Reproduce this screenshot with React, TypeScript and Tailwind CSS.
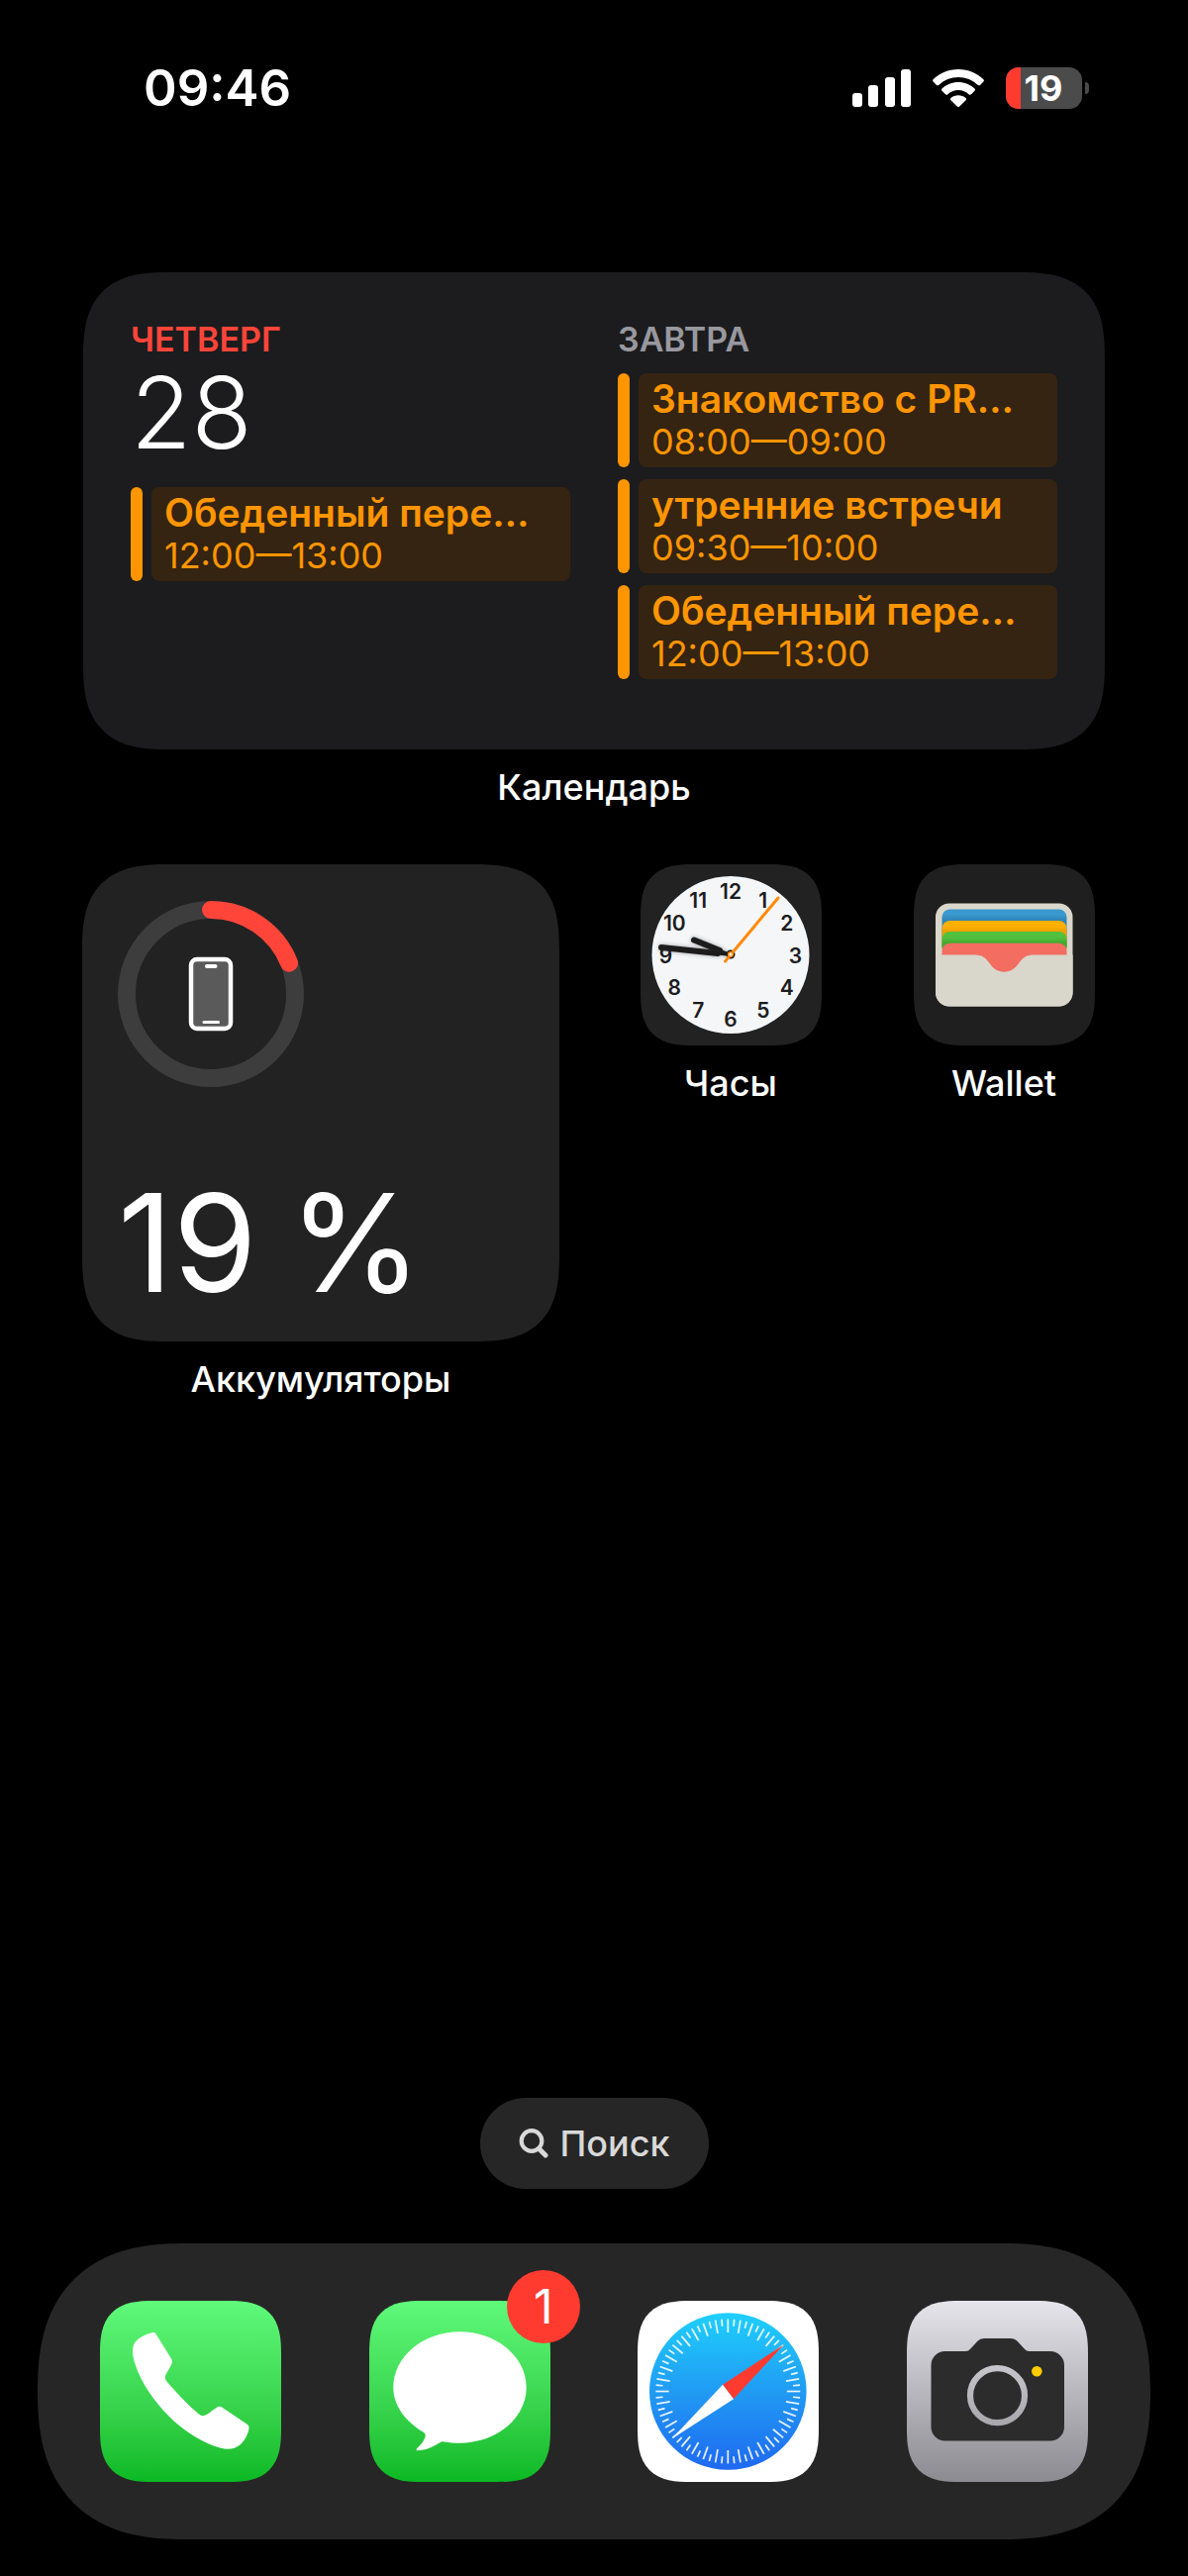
import type { ReactNode } from "react";

type CalendarEvent = { title: string; time: string };

const todayEvents: CalendarEvent[] = [{ title: "Обеденный пере…", time: "12:00—13:00" }];

const tomorrowEvents: CalendarEvent[] = [
  { title: "Знакомство с PR…", time: "08:00—09:00" },
  { title: "утренние встречи", time: "09:30—10:00" },
  { title: "Обеденный пере…", time: "12:00—13:00" },
];

const batteryLevel = 19;

const widgetShape =
  "rounded-[68px] supports-[corner-shape:squircle]:rounded-[88px] [corner-shape:superellipse(1.46)]";
const iconShape =
  "rounded-[42px] supports-[corner-shape:squircle]:rounded-[54px] [corner-shape:superellipse(1.46)]";

function SignalIcon() {
  return (
    <svg width="59" height="38" viewBox="0 0 59 38" fill="#fff" aria-label="Сигнал">
      <rect x="0" y="24" width="10" height="14" rx="3" />
      <rect x="16" y="16" width="10" height="22" rx="3" />
      <rect x="33" y="8" width="10" height="30" rx="3" />
      <rect x="49" y="0" width="10" height="38" rx="3" />
    </svg>
  );
}

function WifiIcon() {
  return (
    <svg width="52" height="38" viewBox="0 0 52 38" fill="#fff" aria-label="Wi-Fi">
      <path d="M26 0C36 0 45 4 51.4 10.200c.7.7.7 1.600 0 2.300l-3.400 3.400c-.6.600-1.500.600-2.200 0C40.500 11 33.500 8 26 8S11.500 11 6.200 15.900c-.7.600-1.600.600-2.200 0L.600 12.500c-.7-.7-.7-1.600 0-2.300C7 4 16 0 26 0z" />
      <path d="M26 13c6.400 0 12.200 2.500 16.500 6.500.7.700.7 1.600 0 2.300l-3.500 3.500c-.6.600-1.500.600-2.200.1C33.900 22.800 30.100 21 26 21s-7.900 1.800-10.800 4.400c-.7.500-1.600.500-2.200-.1l-3.500-3.500c-.7-.7-.7-1.600 0-2.300C13.800 15.500 19.600 13 26 13z" />
      <path d="M26 26.200c2.900 0 5.500 1 7.500 2.700.8.700.8 1.600.1 2.300l-6.400 6.300c-.7.700-1.700.700-2.400 0l-6.400-6.300c-.7-.7-.7-1.600.1-2.300 2-1.700 4.600-2.700 7.500-2.700z" />
    </svg>
  );
}

function BatteryIndicator() {
  return (
    <div className="flex items-center gap-[3px]">
      <div className="flex h-[42px] w-[77px] items-center overflow-hidden rounded-[13px] bg-[#4b4b4b]">
        <div className="h-full w-[15px] bg-[#ff3b30]" />
        <span className="grow pr-4 text-center text-[36px] leading-[42px] font-bold">{batteryLevel}</span>
      </div>
      <div className="h-3 w-1 rounded-r-full bg-[#4b4b4b]" />
    </div>
  );
}

function StatusBar() {
  return (
    <header className="flex items-center justify-between pt-[59px] pr-[100px] pl-[145px]">
      <time className="text-[51px] leading-[60px] font-semibold">09:46</time>
      <div className="flex items-center gap-[22px]">
        <SignalIcon />
        <WifiIcon />
        <BatteryIndicator />
      </div>
    </header>
  );
}

function EventRow({ title, time }: CalendarEvent) {
  return (
    <li className="flex gap-[9px] text-[#ff9500]">
      <span className="w-3 shrink-0 rounded-full bg-[#ff9500]" />
      <div className="min-w-0 grow rounded-lg bg-[#342411] px-[13px] pt-1 pb-[5px]">
        <p className="text-[39px] leading-[44px] font-semibold whitespace-nowrap">{title}</p>
        <p className="text-[36px] leading-[42px]">{time}</p>
      </div>
    </li>
  );
}

function CalendarWidget() {
  return (
    <section className="col-span-4 flex flex-col gap-4">
      <div className={`mx-9 grid min-h-[482px] grid-cols-2 gap-12 bg-[#1c1c1e] p-12 ${widgetShape}`}>
        <div className="min-w-0">
          <h2 className="text-[34px] leading-[40px] font-semibold text-[#ff453a]">ЧЕТВЕРГ</h2>
          <p className="mt-1 text-[100px] leading-[100px] font-light">28</p>
          <ul className="mt-[25px] flex flex-col gap-3">
            {todayEvents.map((event) => (
              <EventRow key={event.time} {...event} />
            ))}
          </ul>
        </div>
        <div className="min-w-0">
          <h2 className="text-[34px] leading-[40px] font-semibold text-[#98989f]">ЗАВТРА</h2>
          <ul className="mt-[14px] flex flex-col gap-3">
            {tomorrowEvents.map((event) => (
              <EventRow key={event.time} {...event} />
            ))}
          </ul>
        </div>
      </div>
      <p className="text-center text-[36px] leading-[44px] font-medium">Календарь</p>
    </section>
  );
}

function BatteryRing() {
  return (
    <svg width="188" height="188" viewBox="0 0 188 188" fill="none" aria-hidden="true">
      <circle cx="94" cy="94" r="85" stroke="#3d3d3d" strokeWidth="18" />
      <circle
        cx="94"
        cy="94"
        r="85"
        stroke="#ff453a"
        strokeWidth="18"
        strokeLinecap="round"
        pathLength="100"
        strokeDasharray={`${batteryLevel} 100`}
        transform="rotate(-90 94 94)"
      />
      <rect x="74" y="59" width="40" height="70" rx="6" fill="#5a5a5a" stroke="#fff" strokeWidth="4.500" />
      <rect x="88" y="64" width="12.500" height="4" rx="2" fill="#fff" />
      <rect x="85.500" y="121" width="17.500" height="3" rx="1.500" fill="#fff" />
    </svg>
  );
}

function BatteryWidget() {
  return (
    <section className="col-span-2 flex flex-col gap-4">
      <div
        className={`mx-[35px] flex aspect-square flex-col justify-between bg-[#222] px-9 pt-[37px] pb-10 ${widgetShape}`}
      >
        <BatteryRing />
        <p className="text-[137px] leading-[120px] whitespace-nowrap">
          {batteryLevel}
          <span className="text-[114px] leading-[90px]">&nbsp;</span>%
        </p>
      </div>
      <p className="text-center text-[36px] leading-[44px] font-medium">Аккумуляторы</p>
    </section>
  );
}

function ClockArt() {
  return (
    <svg className="size-full" viewBox="0 0 183 183" aria-hidden="true">
      <defs>
        <filter id="hand-shadow" x="-20%" y="-60%" width="140%" height="220%">
          <feDropShadow dx="0" dy="0" stdDeviation="2" floodColor="#000" floodOpacity="0.350" />
        </filter>
      </defs>
      <circle cx="91" cy="91.500" r="79.500" fill="#f5f6f8" />
      <g fill="#1c1c1e" fontSize="21" fontWeight="600" textAnchor="middle">
        {Array.from({ length: 12 }, (_, i) => {
          const angle = ((i + 1) * Math.PI) / 6;
          return (
            <text key={i} x={91 + 65.500 * Math.sin(angle)} y={99.500 - 64.500 * Math.cos(angle)}>
              {i + 1}
            </text>
          );
        })}
      </g>
      <g stroke="#1f1f1f" strokeLinecap="round" filter="url(#hand-shadow)">
        <path d="M91 91.500 79 87" strokeWidth="3" />
        <path d="M80 87 54 76.500" strokeWidth="6" />
        <path d="M91 91.500 78 90" strokeWidth="3" />
        <path d="M78 90 21 84" strokeWidth="6" />
      </g>
      <circle cx="91" cy="91" r="4.500" fill="#1f1f1f" />
      <path d="M85.500 98 139 34" stroke="#ff8a0a" strokeWidth="3" strokeLinecap="round" />
      <circle cx="91" cy="91" r="2.300" fill="#fff" stroke="#ff8a0a" strokeWidth="1.500" />
    </svg>
  );
}

function WalletArt() {
  return (
    <svg className="size-full" viewBox="0 0 183 183" aria-hidden="true">
      <defs>
        <linearGradient id="wallet-blue" x1="0" x2="0" y1="45" y2="57" gradientUnits="userSpaceOnUse">
          <stop offset="0.500" stopColor="#3a99ce" />
          <stop offset="1" stopColor="#2f83b6" />
        </linearGradient>
        <linearGradient id="wallet-yellow" x1="0" x2="0" y1="57" y2="68" gradientUnits="userSpaceOnUse">
          <stop offset="0.500" stopColor="#ffb000" />
          <stop offset="1" stopColor="#ec9f00" />
        </linearGradient>
        <linearGradient id="wallet-green" x1="0" x2="0" y1="68" y2="80" gradientUnits="userSpaceOnUse">
          <stop offset="0.500" stopColor="#51c03d" />
          <stop offset="1" stopColor="#42a82f" />
        </linearGradient>
      </defs>
      <rect x="22" y="39.500" width="138.500" height="104" rx="14" fill="#d9d7cc" />
      <rect x="28.500" y="45.500" width="126" height="45" rx="8" fill="url(#wallet-blue)" />
      <rect x="28.500" y="57" width="126" height="34" rx="8" fill="url(#wallet-yellow)" />
      <rect x="28.500" y="68" width="126" height="24" rx="8" fill="url(#wallet-green)" />
      <path d="M28.500 112V88a8 8 0 0 1 8-8.300h110a8 8 0 0 1 8 8.300v24z" fill="#f36d60" />
      <path
        d="M22 91.500h40c7.500 0 11 3.500 14.500 8.500 4 5.500 8.500 8.700 14.800 8.700s10.800-3.200 14.800-8.700c3.500-5 7-8.500 14.500-8.500h40v38a14 14 0 0 1-14 14H36a14 14 0 0 1-14-14z"
        fill="#d9d7cc"
      />
    </svg>
  );
}

function PhoneArt() {
  return (
    <svg className="size-full" viewBox="0 0 183 183" aria-hidden="true">
      <path
        d="M52.500 32.200C45 34 37.500 38 34.500 43.500 32 48.500 33 57 35.500 64 42 84 55 101.500 69 116c15 15.500 36 28.500 53 32.800 8 2 14.500.7 19.500-3.300 5-4.500 8.500-11.500 9-17 .1-1.600-.3-2.600-1.500-3.500L123.500 107.800c-2-1.300-3.600-1.300-5.500-.1-3.500 2.300-6.500 4.800-10.500 7.300-2.700 1.700-5 1.500-7.500-.500C88.500 105 76 91.500 67.500 81.500c-2-2.500-2.200-4.600-.7-7.500 1.800-3.500 4-6.500 5.500-10 .9-2 .8-3.600-.3-5.500L56.500 33.500c-1-1.500-2.200-1.800-4-1.300z"
        fill="#fff"
      />
    </svg>
  );
}

function MessagesArt() {
  return (
    <svg className="size-full" viewBox="0 0 183 183" aria-hidden="true">
      <path
        d="M91.500 31.300c37 0 67.200 25.200 67.200 56.200s-30.200 56.200-67.200 56.200c-5.500 0-10.500-.4-15.500-1.300-2.300-.4-4 .200-6 1.500-6.500 4.200-13 7-21 7.300-1.500 0-1.900-1.100-.8-2.200 3.300-3.100 6.300-6.500 7.900-10.300 1.200-2.900.7-4.600-1.700-6.200C36 121.500 24.300 105.500 24.300 87.500c0-31 30.200-56.200 67.200-56.200z"
        fill="#fff"
      />
    </svg>
  );
}

function SafariArt() {
  return (
    <svg className="size-full" viewBox="0 0 183 183" aria-hidden="true">
      <defs>
        <linearGradient id="safari-face" x1="0" x2="0" y1="0" y2="1">
          <stop offset="0" stopColor="#1fd0fd" />
          <stop offset="0.500" stopColor="#209bf3" />
          <stop offset="1" stopColor="#1f69f1" />
        </linearGradient>
      </defs>
      <circle cx="91.300" cy="91.500" r="79.300" fill="url(#safari-face)" />
      <g stroke="#fff" strokeOpacity="0.900" strokeWidth="1.700">
        {Array.from({ length: 72 }, (_, i) => (
          <line
            key={i}
            x1="91.300"
            x2="91.300"
            y1="18.500"
            y2={i % 2 === 0 ? 32 : 25.500}
            transform={`rotate(${i * 5} 91.300 91.500)`}
          />
        ))}
      </g>
      <path d="M147.800 44.200 86 84.700 97 99.300z" fill="#ff3b30" />
      <path d="M34.500 139.500 86 84.700 97 99.300z" fill="#fff" />
    </svg>
  );
}

function CameraArt() {
  return (
    <svg className="size-full" viewBox="0 0 183 183" aria-hidden="true">
      <defs>
        <linearGradient id="camera-ring" x1="0" x2="0" y1="0" y2="1">
          <stop offset="0" stopColor="#c6c5cb" />
          <stop offset="1" stopColor="#a9a8ad" />
        </linearGradient>
      </defs>
      <path
        d="M39 51h20c2.500 0 3.700-.8 5.300-2.500l6.700-7.200c2.300-2.500 4.300-3.300 7.500-3.300h26c3.200 0 5.200.8 7.500 3.300l6.700 7.200c1.600 1.700 2.800 2.500 5.300 2.500h20.500a14 14 0 0 1 14.500 14v62.500a14 14 0 0 1-14.500 14H39a14 14 0 0 1-14.500-14V65A14 14 0 0 1 39 51z"
        fill="#2c2c2c"
      />
      <circle cx="91.500" cy="95.700" r="27.500" fill="none" stroke="url(#camera-ring)" strokeWidth="6.200" />
      <circle cx="131.300" cy="71.300" r="5.300" fill="#ffcc00" />
    </svg>
  );
}

function AppIcon({
  label,
  className,
  badge,
  showLabel = false,
  children,
}: {
  label: string;
  className: string;
  badge?: number;
  showLabel?: boolean;
  children: ReactNode;
}) {
  return (
    <button type="button" aria-label={label} className="flex flex-col items-center gap-4">
      <span className="relative block size-[183px]">
        <span className={`block size-full ${iconShape} ${className}`}>{children}</span>
        {badge !== undefined && (
          <span className="absolute -top-[31px] -right-[30px] flex size-[74px] items-center justify-center rounded-full bg-[#ff3b30] text-[48px] leading-[48px]">
            {badge}
          </span>
        )}
      </span>
      {showLabel && <span className="text-[36px] leading-[44px] font-medium">{label}</span>}
    </button>
  );
}

function SearchPill() {
  return (
    <button
      type="button"
      className="mt-auto flex items-center gap-3 self-center rounded-full bg-[#262626] px-[39px] py-6 text-[36px] leading-[44px] font-medium text-[#d9d9d9]"
    >
      <svg width="30" height="30" viewBox="0 0 30 30" fill="none" stroke="currentColor" aria-hidden="true">
        <circle cx="13" cy="12.500" r="10.300" strokeWidth="4.200" />
        <path d="M20.500 20.500 27 27" strokeWidth="5" strokeLinecap="round" />
      </svg>
      Поиск
    </button>
  );
}

function Dock() {
  return (
    <nav className="mx-[38px] mt-[55px] mb-[37px] flex justify-between rounded-[124px] bg-[#262626] px-[63px] py-[58px] [corner-shape:superellipse(1.3)] supports-[corner-shape:squircle]:rounded-[149px]">
      <AppIcon label="Телефон" className="bg-linear-to-b from-[#60fa7b] to-[#09b923]">
        <PhoneArt />
      </AppIcon>
      <AppIcon label="Сообщения" badge={1} className="bg-linear-to-b from-[#60fa7b] to-[#09b923]">
        <MessagesArt />
      </AppIcon>
      <AppIcon label="Safari" className="bg-white">
        <SafariArt />
      </AppIcon>
      <AppIcon label="Камера" className="bg-linear-to-b from-[#e6e5eb] to-[#8c8b91]">
        <CameraArt />
      </AppIcon>
    </nav>
  );
}

export default function App() {
  return (
    <div className="flex min-h-screen flex-col bg-black font-['Inter','Noto_Sans',sans-serif] text-white">
      <StatusBar />
      <main className="mt-[156px] grid grid-cols-4 items-start gap-y-14 px-12">
        <CalendarWidget />
        <BatteryWidget />
        <AppIcon label="Часы" showLabel className="bg-[#222]">
          <ClockArt />
        </AppIcon>
        <AppIcon label="Wallet" showLabel className="bg-[#1f1f1f]">
          <WalletArt />
        </AppIcon>
      </main>
      <SearchPill />
      <Dock />
    </div>
  );
}
